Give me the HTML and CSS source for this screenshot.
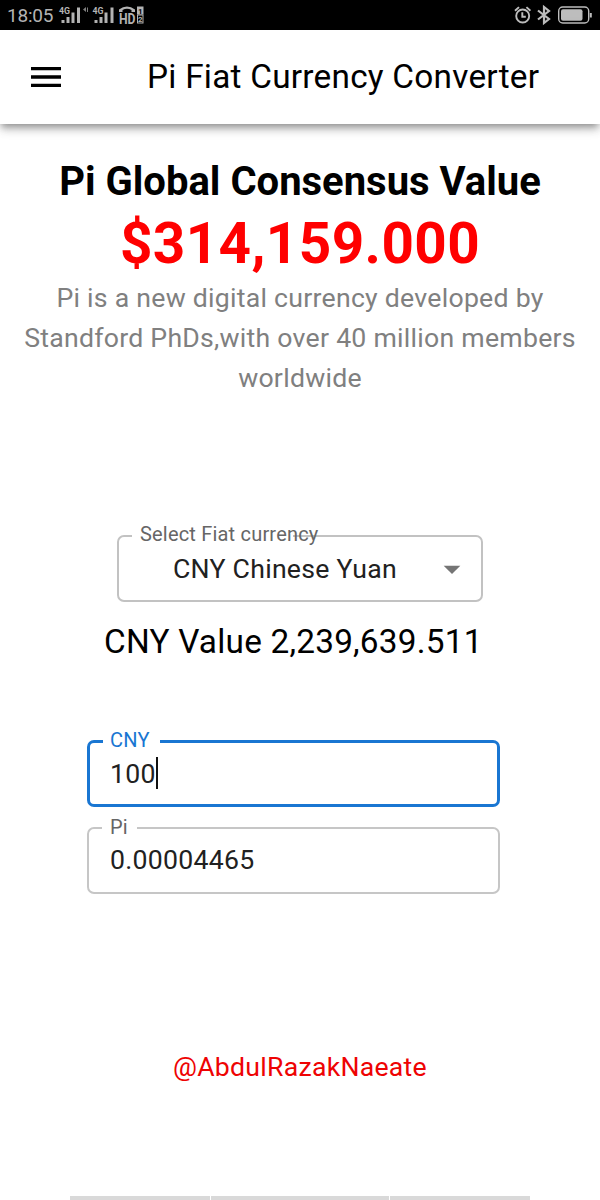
FILE: index.html
```html
<!DOCTYPE html>
<html lang="en">
<head>
<meta charset="utf-8">
<title>Pi Fiat Currency Converter</title>
<link rel="stylesheet" href="styles.css">
</head>
<body>
<div class="status">
  <span class="clock">18:05</span>
  <svg class="signals" width="90" height="24" viewBox="0 0 90 24" fill="#b4b4b4">
    <text x="1" y="9.5" class="net" textLength="11" lengthAdjust="spacingAndGlyphs">4G</text>
    <path d="M3.500 16h3v3h-3zM8.500 13h3v6h-3zM13.500 8.500h3V19h-3zM19 3.500h3V19h-3z"/>
    <path d="M25 5.500l3-2.500v5zM29 3.500h1v4.500h-1z" opacity=".7"/>
    <text x="34.500" y="9.500" class="net" textLength="11" lengthAdjust="spacingAndGlyphs">4G</text>
    <path d="M36.500 16h3v3h-3zM41.500 13h3v6h-3zM46.500 8.500h3V19h-3zM52.500 3.500h3V19h-3z"/>
    <path d="M61 8V5.500Q69 -.500 77 5.500V8H73.500V6Q69 3.500 64.500 6V8z"/>
    <text x="61" y="19.500" class="hd" textLength="16.500" lengthAdjust="spacingAndGlyphs">HD</text>
    <rect x="79" y="2.500" width="6.500" height="8"/>
    <rect x="79.500" y="11" width="5.500" height="8" fill="none" stroke="#b4b4b4"/>
    <text x="80" y="9.500" class="sim sim-dark">1</text>
    <text x="80" y="18" class="sim">2</text>
  </svg>
  <svg class="device" width="84" height="24" viewBox="0 0 84 24" fill="none" stroke="#bdbdbd">
    <circle cx="8.700" cy="12" r="6.500" stroke-width="1.900"/>
    <path d="M8.300 8.300v4.500h3.500M1 6.800l4-3.700M16.400 6.800l-4-3.700" stroke-width="1.900"/>
    <path d="M24 6.500l11 8.500-5 4V3l5 4-11 8.500" stroke-width="2.200"/>
    <rect x="44.700" y="3" width="30" height="16" rx="4" stroke-width="1.400"/>
    <rect x="47" y="5.300" width="21.500" height="11.500" rx="2" fill="#bdbdbd" stroke="none"/>
    <path d="M76.800 9v4.500" stroke-width="2"/>
  </svg>
</div>
<header class="appbar">
  <svg class="menu" width="40" height="40" viewBox="0 0 24 24"><path d="M3 18h18v-2H3v2zm0-5h18v-2H3v2zm0-7v2h18V6H3z"/></svg>
  <span class="title">Pi Fiat Currency Converter</span>
</header>
<main class="content">
  <h1 class="heading">Pi Global Consensus Value</h1>
  <div class="price">$314,159.000</div>
  <p class="intro">Pi is a new digital currency developed by<br>Standford PhDs,with over 40 million members<br>worldwide</p>
  <fieldset class="field select">
    <legend class="legend">Select Fiat currency</legend>
    <div class="value">
      <span class="choice">CNY Chinese Yuan</span>
      <svg class="arrow" width="40" height="40" viewBox="0 0 24 24"><path d="M7 10l5 5 5-5z"/></svg>
    </div>
  </fieldset>
  <div class="rate">CNY Value 2,239,639.511</div>
  <fieldset class="field focused">
    <legend class="legend">CNY</legend>
    <div class="value">100<span class="caret"></span></div>
  </fieldset>
  <fieldset class="field amount">
    <legend class="legend">Pi</legend>
    <div class="value">0.00004465</div>
  </fieldset>
  <a class="credit">@AbdulRazakNaeate</a>
</main>
<nav class="gesture"><i class="bar"></i><i class="bar middle"></i><i class="bar"></i></nav>
</body>
</html>
```
FILE: styles.css
```css
* { box-sizing: border-box; }
body {
  margin: 0;
  width: 600px;
  height: 1200px;
  overflow: hidden;
  display: flex;
  flex-direction: column;
  background: #fff;
  color: #000;
  font-family: Roboto, sans-serif;
}
.status {
  flex: none;
  height: 30px;
  padding: 4px 7px 0;
  display: flex;
  background: #000;
  color: #b4b4b4;
}
.clock { flex: none; width: 51px; font-size: 19px; line-height: 24px; letter-spacing: -.2px; }
.signals { flex: none; }
.device { flex: none; margin-left: 366px; }
.net { font: bold 9.500px Roboto, sans-serif; }
.hd { font: bold 14.500px Roboto, sans-serif; }
.sim { font: bold 8px Roboto, sans-serif; }
.sim-dark { fill: #000; }
.appbar {
  flex: none;
  height: 93.500px;
  padding-left: 26.500px;
  display: flex;
  align-items: center;
  box-shadow: 0 3.300px 6.700px -1.700px rgba(0,0,0,.32), 0 6.700px 8.300px rgba(0,0,0,.14), 0 1.700px 16.700px rgba(0,0,0,.1);
}
.menu { flex: none; margin-left: -.5px; }
.title { margin-left: 81px; font-size: 33.333px; letter-spacing: .25px; white-space: nowrap; }
.content { flex: 1; display: flex; flex-direction: column; }
.heading { margin: 34.500px 0 0; font-size: 40px; line-height: 48px; text-align: center; font-weight: 700; }
.price { margin-top: 3px; font-size: 56.667px; line-height: 69px; font-weight: 700; text-align: center; color: #f00; letter-spacing: .4px; }
.intro { margin: 0; font-size: 26.667px; line-height: 40px; letter-spacing: .25px; text-align: center; color: #808080; }
.field {
  min-width: 0;
  margin: 0 0 0 87px;
  padding: 0;
  width: 413px;
  border: 2px solid #c6c6c6;
  border-radius: 7px;
  color: #212121;
}
.legend {
  margin-left: 13px;
  padding: 0 0 0 8px;
  width: 35px;
  height: 24px;
  font-size: 20px;
  line-height: 22px;
  letter-spacing: .19px;
  white-space: nowrap;
  color: #666;
}
.value {
  height: 53px;
  padding: 0 21px;
  font-size: 26.667px;
  line-height: 40px;
  letter-spacing: .25px;
  display: flex;
}
.select { width: 366px; margin: 126px 0 0 117px; border-color: #c2c2c2; }
.select .legend { width: 161px; margin-left: 13px; padding-left: 8px; line-height: 20px; }
.select .value { height: 52px; padding: 0 9px 0 54px; justify-content: space-between; line-height: 42px; }
.arrow { fill: #757575; margin-top: 1px; }
.rate { margin: 20px 0 0 104px; font-size: 33.333px; line-height: 40px; letter-spacing: .22px; }
.focused { margin-top: 67px; border: 3px solid #1976d2; }
.focused .legend { width: 57px; padding-left: 7px; color: #1976d2; }
.focused .value { height: 51px; padding-left: 20px; line-height: 42px; }
.caret { width: 2px; height: 32px; margin-top: 4px; background: #111; }
.amount { margin-top: 9px; }
.amount .value { height: 52px; line-height: 41px; }
.credit { margin-top: 152.500px; font-size: 26.667px; line-height: 40px; letter-spacing: .25px; text-align: center; color: #ee0303; }
.gesture { flex: none; display: flex; justify-content: center; gap: 1px; }
.bar { width: 140px; height: 4px; background: #d9d9d9; }
.middle { width: 178px; }
```
